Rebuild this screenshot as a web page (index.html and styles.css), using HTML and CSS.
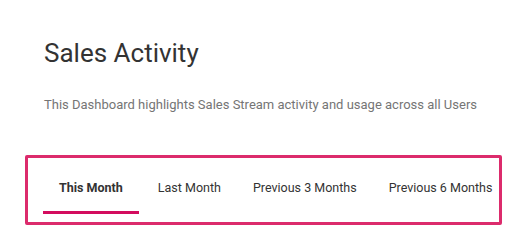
FILE: index.html
```html
<!DOCTYPE html>
<html lang="en">
<head>
<meta charset="utf-8">
<title>Sales Activity</title>
<link rel="stylesheet" href="styles.css">
</head>
<body>
<main class="page">
  <header class="intro">
    <h1 class="title">Sales Activity</h1>
    <p class="subtitle">This Dashboard highlights Sales Stream activity and usage across all Users</p>
  </header>
  <nav class="tabs-box">
    <ul class="tabs">
      <li class="tab active">This Month</li>
      <li class="tab">Last Month</li>
      <li class="tab">Previous 3 Months</li>
      <li class="tab">Previous 6 Months</li>
    </ul>
  </nav>
</main>
</body>
</html>
```
FILE: styles.css
```css
* { box-sizing: border-box; }
html, body { margin: 0; padding: 0; background: #ffffff; }
body {
  font-family: Roboto, "Noto Sans", sans-serif;
  color: #333333;
}
.page {
  padding: 38px 24px 0 25px;
}
.intro {
  padding-left: 19px;
}
.title {
  margin: 0;
  font-size: 26px;
  line-height: 30px;
  font-weight: 400;
  color: #333333;
}
.subtitle {
  margin: 29px 0 0;
  font-size: 13px;
  line-height: 16px;
  color: #757575;
}
.tabs-box {
  margin-top: 42px;
  width: 477px;
  border: 3px solid #dc2b6c;
  border-radius: 2px;
  padding: 20px 15px 8px;
}
.tabs {
  list-style: none;
  margin: 0;
  padding: 0;
  display: flex;
}
.tab {
  padding: 0 16px 13px;
  font-size: 12.5px;
  line-height: 20px;
  color: #333333;
  border-bottom: 3px solid transparent;
  white-space: nowrap;
}
.tab.active {
  font-weight: 700;
  border-bottom-color: #d30c5e;
  margin-right: 3px;
}
```
